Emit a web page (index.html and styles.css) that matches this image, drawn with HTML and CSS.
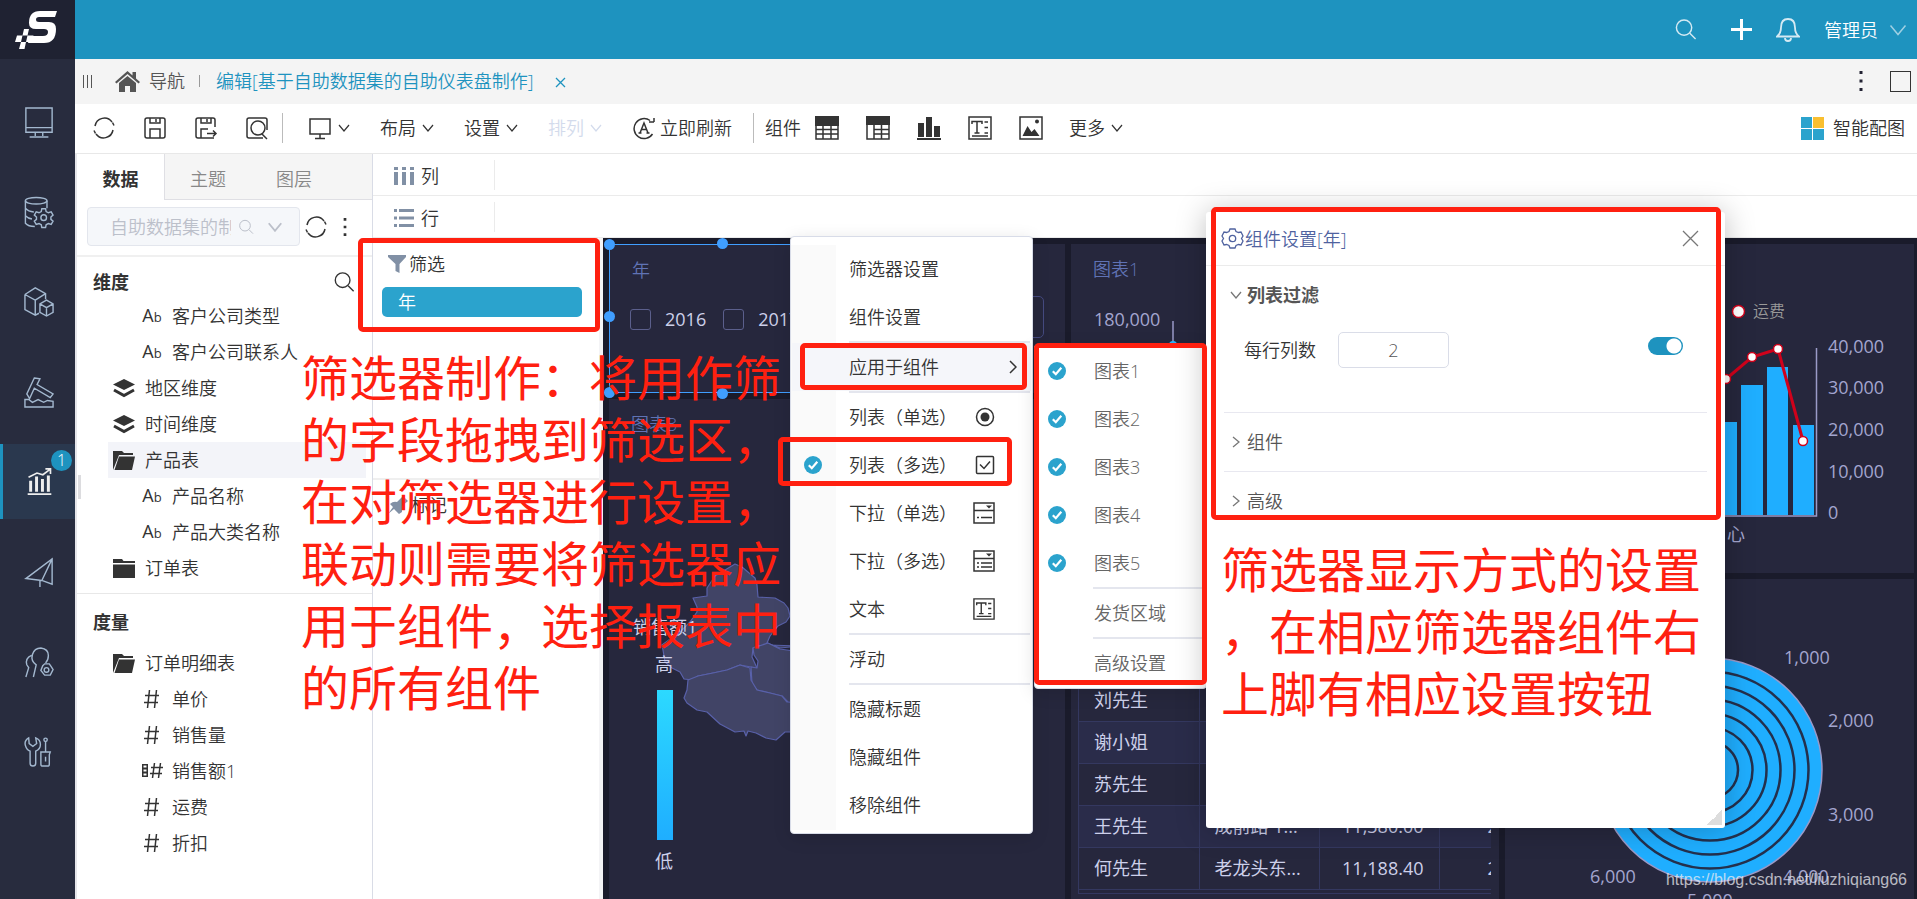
FILE: index.html
```html
<!DOCTYPE html>
<html lang="zh-CN">
<head>
<meta charset="utf-8">
<title>自助仪表盘制作</title>
<link rel="stylesheet" href="styles.css">
</head>
<body>
<svg class="sprite" aria-hidden="true">
  <symbol id="i-chev" viewBox="0 0 12 8"><path d="M1 1l5 6 5-6"/></symbol>
  <symbol id="i-refresh" viewBox="0 0 24 24"><path d="M3 10a9.500 9.500 0 0 1 17-4M21 14a9.500 9.500 0 0 1-17 4M2 14.500l1.500 3M22 9.500l-1.500-3"/></symbol>
  <symbol id="i-search" viewBox="0 0 24 24"><circle cx="10.500" cy="10" r="8"/><path d="M16.500 16l6 6"/></symbol>
  <symbol id="i-save" viewBox="0 0 24 24"><rect x="2" y="2" width="20" height="20" rx="2"/><path d="M7 2v5h10V2M13 3v3M7 22v-9h10v9"/></symbol>
  <symbol id="i-saveas" viewBox="0 0 24 24"><path d="M21 11V4a2 2 0 0 0-2-2H4a2 2 0 0 0-2 2v16a2 2 0 0 0 2 2h16M7 2v5h10V2M13 3v3M7 22v-9h7M13 17.500h9M19 14.500l3 3-3 3"/></symbol>
  <symbol id="i-preview" viewBox="0 0 24 24"><path d="M6 2H4a2 2 0 0 0-2 2v16a2 2 0 0 0 2 2h14M6 2h14a2 2 0 0 1 2 2v10"/><circle cx="13" cy="12" r="7"/><path d="M17 18l5 5"/></symbol>
  <symbol id="i-monitor" viewBox="0 0 24 24"><path d="M2 3h20v15H2zM12 18v4M7 22.500h10"/></symbol>
  <symbol id="i-auto" viewBox="0 0 24 24"><path d="M18 4.500A10 10 0 1 0 20.500 18M17 6h5M22 6V2M8 17l4-10 4 10M9.500 13.500h5M6.500 17h3M14.500 17h3"/></symbol>
  <symbol id="i-table" viewBox="0 0 24 24"><path class="f" d="M0 0h24v10H0z"/><path d="M1 9v14h22V9M1 13.500h22M1 18h22M8 9v14M16 9v14"/></symbol>
  <symbol id="i-pivot" viewBox="0 0 24 24"><path class="f" d="M0 0h24v9H0z"/><path d="M1 9v14h22V9M8 9v14M8 13.500h15M8 18h15M15.500 9v14"/></symbol>
  <symbol id="i-bars" viewBox="0 0 24 24"><path class="f" d="M1 7h6v14H1zM9 1h6v20H9zM17 10h6v11h-6zM0 22h24v2H0z"/></symbol>
  <symbol id="i-text" viewBox="0 0 24 24"><path d="M1 1h22v22H1zM4 8V5.500h10V8M9 5.500V17M6.500 17h5M16.500 6H20M16.500 11.500H20M16.500 17H20M4 20h16"/></symbol>
  <symbol id="i-image" viewBox="0 0 24 24"><path d="M1 1h22v22H1z"/><path class="f" d="M3.500 20l5-10 4 6 3-3 5 7z"/><circle class="f" cx="18" cy="5.500" r="2"/></symbol>
  <symbol id="i-check" viewBox="0 0 18 18"><circle class="ok" cx="9" cy="9" r="9"/><path class="tick" d="M4.800 9.200l3 3 5.500-6.500"/></symbol>
  <symbol id="i-layers" viewBox="0 0 22 20"><path class="f" d="M11 1l11 5.500L11 12 0 6.500z"/><path class="w" d="M1 12l10 5.500L21 12"/></symbol>
  <symbol id="i-open" viewBox="0 0 22 20"><path class="f" d="M0 20V1h9l2 2h9v2H6zM6 6.500h16L19 20H1.500z"/></symbol>
  <symbol id="i-folder" viewBox="0 0 22 20"><path class="f" d="M0 1h9l1.500 2H22v2H0zM0 6.500h22V20H0z"/></symbol>
  <symbol id="i-hash" viewBox="0 0 16 20"><path d="M5.500 1L3.500 19M12.500 1l-2 18M1 6.500h14M0 13.500h14"/></symbol>
  <symbol id="i-dots" viewBox="0 0 4 20"><path class="f" d="M.500 0h3v3h-3zM.500 8.500h3v3h-3zM.500 17h3v3h-3z"/></symbol>
  <symbol id="i-drop1" viewBox="0 0 22 22"><path d="M1 1h20v20H1zM1 8.500h20M8 15.500h11M4 15.500h2"/><path class="f" d="M13 3.500h6l-3 3z"/></symbol>
  <symbol id="i-drop2" viewBox="0 0 22 22"><path d="M1 1h20v20H1zM1 8.500h20M8 13h11M4 13h2M8 17h11M4 17h2"/><path class="f" d="M13 3.500h6l-3 3z"/></symbol>
</svg>

<div class="app">
  <aside class="rail">
    <a class="logo" href="#" aria-label="首页">
      <svg width="44" height="40" viewBox="0 0 44 40"><path fill="#fff" d="M43 1L41 7H25q-3 0-3 2.500t3 2.500h10q7 0 7 7 0 14-12 14H14l2-7h13q5 0 5-4 0-3-4-3h-8q-7 0-7-6 0-12 11-12zM10 19h5l-1.500 6.500H8.500zM3 25.500h5.500L7 32H1zM13.500 25.500h6L18 32h-6zM7 32h5l-1.500 7H5z"/></svg>
    </a>
    <nav class="rail-nav">
      <button class="rail-item" aria-label="门户"><svg viewBox="0 0 32 32"><path d="M2 1h28v26H2zM2 22h28M12 27v4M20 27v4M6 32h20"/></svg></button>
      <button class="rail-item" aria-label="数据"><svg viewBox="0 0 32 32"><ellipse cx="13" cy="4" rx="11.500" ry="3.500"/><path d="M1.500 4v24q3 3.500 10 3.500M24.500 4v8M1.500 12q3 3.500 9 4M1.500 20q3 3 7 3.500"/><circle cx="21" cy="22" r="3"/><path d="M19 12.500h4l.600 3 2.400 1.300 3-1 2 3.500-2.300 2v2.500l2.300 2-2 3.500-3-1-2.400 1.300-.600 3h-4l-.600-3-2.400-1.300-3 1-2-3.500 2.300-2v-2.500l-2.300-2 2-3.500 3 1 2.400-1.300z"/></svg></button>
      <button class="rail-item" aria-label="数据集"><svg viewBox="0 0 32 32"><path d="M1 8l11-7 11 6v6M1 8v16l11 6 4-2M1 8l11 6v16M12 14l11-7M17 18l7-4 7 4v9l-7 4-7-4zM17 18l7 4 7-4M24 22v9"/></svg></button>
      <button class="rail-item" aria-label="加工"><svg viewBox="0 0 32 32"><path d="M11 1l6 1-3 6 17 10-3 4-17-10-5 11-3-5zM1 24v8h30v-6l-6-1-4 2-6-3-6 3-4-3z"/></svg></button>
      <button class="rail-item active" aria-label="分析展现"><svg viewBox="0 0 32 32"><path d="M2 31h28M3 11l10-5 7 2 8-6M23 1h6v6"/><path d="M5.500 15v13M12.500 10v18M19.500 13v15M26.500 9v19" stroke-width="3.500"/></svg><span class="badge">1</span></button>
      <button class="rail-item" aria-label="发布"><svg viewBox="0 0 32 32"><path d="M30 2v27l-11-4-17-2zM30 2L19 25M17 24v8"/></svg></button>
      <button class="rail-item" aria-label="用户"><svg viewBox="0 0 32 32"><path d="M10 32l3-13Q7 15 9 8q2-7 9-7 8 1 8 8 0 5-3 8M8 9q-7 3-5 10l2 3-3 10"/><path d="M20 20l2-2h5l2 3 2 3-3 6h-6l-4-5z"/><circle cx="24" cy="24.500" r="2.500"/></svg></button>
      <button class="rail-item" aria-label="系统"><svg viewBox="0 0 32 32"><path d="M5 1Q0 4 1.500 9t5 6V28q0 3 3 3t3-3V15q5-2 5-7t-5-7l1 6-4 3-4-3z"/><circle cx="23" cy="3" r="1.800"/><path d="M23 5v11M18 16h10l-1 3v10q0 2-2 2h-5q-2 0-2-2V19zM23 21v5"/></svg></button>
    </nav>
  </aside>

  <div class="main">
    <header class="topbar">
      <button aria-label="搜索"><svg class="ln" width="23" height="23"><use href="#i-search"/></svg></button>
      <button aria-label="新建"><svg width="21" height="21" viewBox="0 0 21 21"><path d="M10.500 0v21M0 10.500h21" stroke="#fff" stroke-width="3"/></svg></button>
      <button aria-label="消息"><svg class="ln" width="24" height="24" viewBox="0 0 24 24"><path d="M1 18.500q4-3 4-9Q5 1 12 1t7 8.500q0 6 4 9zM9 20q0 3 3 3t3-3" stroke-width="1.800"/></svg></button>
      <button class="user">管理员<svg class="ln" width="20" height="12"><use href="#i-chev"/></svg></button>
    </header>

    <nav class="crumbs">
      <svg width="11" height="13" viewBox="0 0 11 13"><path d="M1.500 0v13M5.500 0v13M9.500 0v13" stroke="#555"/></svg>
      <a class="home" href="#"><svg width="25" height="21" viewBox="0 0 25 21"><path fill="#555" d="M12.500 0L0 11l1.500 1.500L12.500 3l11 9.500L25 11l-4-3.500V1h-3.500v3.500zM4 12v9h6v-6h5v6h6v-9l-8.500-7z"/></svg>导航</a>
      <i class="vbar"></i>
      <a class="doc" href="#">编辑[基于自助数据集的自助仪表盘制作]</a>
      <button class="close-tab" aria-label="关闭"><svg width="11" height="11" viewBox="0 0 11 11"><path d="M1 1l9 9M10 1l-9 9" stroke="#1e93bf" stroke-width="1.300"/></svg></button>
      <button class="more" aria-label="更多操作"><svg width="4" height="22"><use href="#i-dots"/></svg></button>
      <button class="max" aria-label="最大化"></button>
    </nav>

    <div class="toolbar">
      <button class="tool" aria-label="刷新"><svg width="24" height="24"><use href="#i-refresh"/></svg></button>
      <button class="tool" aria-label="保存"><svg width="24" height="24"><use href="#i-save"/></svg></button>
      <button class="tool" aria-label="另存为"><svg width="24" height="24"><use href="#i-saveas"/></svg></button>
      <button class="tool" aria-label="预览"><svg width="24" height="24"><use href="#i-preview"/></svg></button>
      <i class="sep"></i>
      <div class="drops">
        <button aria-label="设备"><svg width="24" height="24"><use href="#i-monitor"/></svg><svg class="cv" width="12" height="8"><use href="#i-chev"/></svg></button>
        <button>布局<svg class="cv" width="12" height="8"><use href="#i-chev"/></svg></button>
        <button>设置<svg class="cv" width="12" height="8"><use href="#i-chev"/></svg></button>
        <button class="off">排列<svg class="cv" width="12" height="8"><use href="#i-chev"/></svg></button>
        <button class="auto"><svg width="24" height="24"><use href="#i-auto"/></svg>立即刷新</button>
      </div>
      <i class="sep"></i>
      <span class="lbl">组件</span>
      <button class="tool" aria-label="表格"><svg width="24" height="24"><use href="#i-table"/></svg></button>
      <button class="tool" aria-label="交叉表"><svg width="24" height="24"><use href="#i-pivot"/></svg></button>
      <button class="tool" aria-label="图表"><svg width="24" height="24"><use href="#i-bars"/></svg></button>
      <button class="tool" aria-label="文本"><svg width="24" height="24"><use href="#i-text"/></svg></button>
      <button class="tool" aria-label="图片"><svg width="24" height="24"><use href="#i-image"/></svg></button>
      <div class="drops last"><button>更多<svg class="cv" width="12" height="8"><use href="#i-chev"/></svg></button></div>
      <button class="smart"><svg width="23" height="23" viewBox="0 0 23 23"><path fill="#2ba3cd" d="M0 0h11v11H0zM0 12h11v11H0zM12 12h11v11H12z"/><path fill="#f9bf30" d="M12 0h11v11H12z"/></svg>智能配图</button>
    </div>

    <div class="work">
      <section class="data">
        <div class="tabs"><button class="on">数据</button><button>主题</button><button>图层</button></div>
        <div class="picker">
          <div class="combo">
            <select aria-label="数据集"><option>自助数据集的制作</option></select>
            <div class="combo-icons"><svg width="16" height="16"><use href="#i-search"/></svg><svg width="16" height="10"><use href="#i-chev"/></svg></div>
          </div>
          <button class="reload" aria-label="刷新"><svg class="dk" width="24" height="24"><use href="#i-refresh"/></svg></button>
          <button aria-label="更多"><svg class="dk" width="4" height="18"><use href="#i-dots"/></svg></button>
        </div>
        <div class="group">
          <h2>维度<button aria-label="搜索字段"><svg class="dk" width="22" height="22"><use href="#i-search"/></svg></button></h2>
          <ul class="tree">
            <li class="leaf"><span class="ab">A<small>b</small></span>客户公司类型</li>
            <li class="leaf"><span class="ab">A<small>b</small></span>客户公司联系人</li>
            <li><svg class="dk" width="22" height="20"><use href="#i-layers"/></svg>地区维度</li>
            <li><svg class="dk" width="22" height="20"><use href="#i-layers"/></svg>时间维度</li>
            <li class="sel"><svg class="dk" width="22" height="20"><use href="#i-open"/></svg>产品表</li>
            <li class="leaf"><span class="ab">A<small>b</small></span>产品名称</li>
            <li class="leaf"><span class="ab">A<small>b</small></span>产品大类名称</li>
            <li><svg class="dk" width="22" height="20"><use href="#i-folder"/></svg>订单表</li>
          </ul>
        </div>
        <div class="group">
          <h2>度量</h2>
          <ul class="tree">
            <li><svg class="dk" width="22" height="20"><use href="#i-open"/></svg>订单明细表</li>
            <li class="leaf"><span class="ab"><svg class="dk" width="16" height="20"><use href="#i-hash"/></svg></span>单价</li>
            <li class="leaf"><span class="ab"><svg class="dk" width="16" height="20"><use href="#i-hash"/></svg></span>销售量</li>
            <li class="leaf"><span class="ab"><svg class="dk" width="21" height="18" viewBox="0 0 21 18"><path class="f" fill-rule="evenodd" d="M0 2h6v13H0zM1.500 3.500v2h3v-2zM1.500 7.500v2h3v-2zM1.500 11.500v2h3v-2z"/><path d="M12.500 1l-2 15M18.500 1l-2 15M9 5.500h12M8 11.500h12"/></svg></span>销售额1</li>
            <li class="leaf"><span class="ab"><svg class="dk" width="16" height="20"><use href="#i-hash"/></svg></span>运费</li>
            <li class="leaf"><span class="ab"><svg class="dk" width="16" height="20"><use href="#i-hash"/></svg></span>折扣</li>
          </ul>
        </div>
      </section>

      <section class="stage">
        <div class="shelf"><span><svg width="20" height="18" viewBox="0 0 20 18"><path fill="#8190a5" d="M0 0h4v3H0zM8 0h4v3H8zM16 0h4v3h-4zM0 5h4v13H0zM8 5h4v13H8zM16 5h4v13h-4z"/></svg>列</span></div>
        <div class="shelf"><span><svg width="20" height="18" viewBox="0 0 20 18"><path fill="#8190a5" d="M0 0h3v3H0zM0 7.500h3v3H0zM0 15h3v3H0zM5 0h15v3H5zM5 7.500h15v3H5zM5 15h15v3H5z"/></svg>行</span></div>
        <div class="lower">
          <div class="marks">
            <div class="filter">
              <div class="cap"><svg width="18" height="18" viewBox="0 0 18 18"><path fill="#8190a5" d="M0 0h18v2l-6.500 7v9l-4-2V9L0 2z"/></svg>筛选</div>
              <button class="pill">年</button>
            </div>
            <div class="mark"><svg width="20" height="18" viewBox="0 0 20 18"><path fill="#8190a5" d="M0 18l5-7-3-3q3-3 7-2l6-6 5 5-6 5v6l-3 2-5-5z"/></svg>标记</div>
          </div>
          <div class="canvas">
            <div class="col">
              <div class="row">
                <article class="card picked">
                  <h3>年</h3>
                  <div class="years"><label><input type="checkbox">2016</label><label><input type="checkbox">2017</label></div>
                  <i class="dot tl"></i><i class="dot tc"></i><i class="dot ml"></i><i class="dot bl"></i><i class="dot bc"></i>
                </article>
                <article class="card plain"><input class="ghost" type="text" aria-label="筛选值"></article>
              </div>
              <article class="card grow map">
                <h3>图表3</h3>
                <svg class="geo" width="456" height="500" viewBox="609 399 456 500">
                  <g fill="#414466" stroke="#5961aa" stroke-width="1.200" stroke-linejoin="round">
                    <path d="M800 646L768 645 757 646 753 648 752 657 757 668 751 667 740 665 727 670 713 673 698 676 693 680 684 679 680 672 672 668 665 662 663 650 662 645 680 632 690 622 697 612 697 607 693 598 707 596 707 588 715 576 735 564 742 567 755 578 757 585 758 597 775 598 784 603 788 608 790 616 786 622 778 626 770 636 767 643 780 648z"/>
                    <path d="M753 648L768 643 780 649 800 652V704L788 702 782 696 770 693 757 690 752 684 751 667 757 668 758 661 754 655z"/>
                    <path d="M688 680L698 676 713 673 727 670 740 665 750 668 751 680 757 690 770 693 782 696 787 702 800 703V732L785 732 776 740 766 738 756 733 748 731 746 736 744 731 735 732 720 724 707 712 697 710 687 703 684 698 687 690z"/>
                  </g>
                  <defs><linearGradient id="heat" x2="0" y2="1"><stop stop-color="#2cd9ff"/><stop offset="1" stop-color="#1faeff"/></linearGradient></defs>
                  <path fill="url(#heat)" d="M657 690h16v150h-16z"/>
                  <g class="lt"><text x="633" y="634">销售额1</text><text x="655" y="671">高</text><text x="655" y="868">低</text></g>
                </svg>
              </article>
            </div>
            <div class="col c2">
              <article class="card up">
                <h3>图表1</h3>
                <svg class="geo" width="428" height="329" viewBox="1071 244 428 329"><text class="ax" x="1094" y="326">180,000</text><path d="M1173 321v22" stroke="#9a9ac8" stroke-width="1.500"/><circle cx="1173" cy="345" r="4" fill="#2cb6ff"/></svg>
              </article>
              <article class="card grow tbl">
                <div class="clip"><table>
                  <tr><td>刘先生</td><td></td><td></td><td></td></tr>
                  <tr><td>谢小姐</td><td></td><td></td><td></td></tr>
                  <tr><td>苏先生</td><td></td><td></td><td></td></tr>
                  <tr><td>王先生</td><td>成前路 1...</td><td>11,380.00</td><td>2</td></tr>
                  <tr><td>何先生</td><td>老龙头东...</td><td>11,188.40</td><td>2</td></tr>
                </table></div>
              </article>
            </div>
            <div class="col c3">
              <article class="card up">
                <svg class="geo" width="409" height="329" viewBox="1505 244 409 329">
                  <path fill="#1faeff" d="M1715 422h22v93h-22zM1741 385h22v130h-22zM1767 367h21v148h-21zM1793 425h21v90h-21z"/>
                  <path fill="none" stroke="#9a9ac8" stroke-width="1.500" d="M1816.500 348v168H1700"/>
                  <path fill="none" stroke="#d0021b" stroke-width="3" d="M1726 379l26-22 26-8 25 92"/>
                  <g fill="#fff" stroke="#d0021b" stroke-width="1.500"><circle cx="1726" cy="379" r="4.500"/><circle cx="1752" cy="357" r="4.500"/><circle cx="1778" cy="349" r="4.500"/><circle cx="1803" cy="441" r="4.500"/><circle cx="1738.500" cy="311.500" r="6"/></g>
                  <text class="lg" x="1753" y="317">运费</text>
                  <g class="ax"><text x="1828" y="353">40,000</text><text x="1828" y="394">30,000</text><text x="1828" y="436">20,000</text><text x="1828" y="478">10,000</text><text x="1828" y="519">0</text><text x="1727" y="541">心</text></g>
                </svg>
              </article>
              <article class="card grow">
                <svg class="geo" width="409" height="320" viewBox="1505 579 409 320">
                  <circle cx="1710" cy="770" r="112" fill="#1faeff" stroke="#9a9ac8" stroke-width="1.500"/>
                  <g fill="none" stroke="#24304d" stroke-width="2.500"><circle cx="1710" cy="770" r="98.500"/><circle cx="1710" cy="770" r="84.500"/><circle cx="1710" cy="770" r="70.500"/><circle cx="1710" cy="770" r="56.500"/><circle cx="1710" cy="770" r="42.500"/><circle cx="1710" cy="770" r="28"/></g>
                  <g class="ax"><text x="1784" y="664">1,000</text><text x="1828" y="727">2,000</text><text x="1828" y="821">3,000</text><text x="1783" y="883">4,000</text><text x="1687" y="907">5,000</text><text x="1590" y="883">6,000</text></g>
                </svg>
              </article>
            </div>
          </div>
        </div>
      </section>
    </div>
  </div>
</div>

<i class="grip"></i>

<div class="menu">
  <button>筛选器设置</button>
  <button>组件设置</button>
  <hr>
  <button class="hover">应用于组件<svg class="arrow" width="8" height="14" viewBox="0 0 8 14"><path d="M1 1l6 6-6 6"/></svg></button>
  <hr>
  <button>列表（单选）<svg width="20" height="20" viewBox="0 0 20 20"><circle cx="10" cy="10" r="8.500"/><circle class="f" cx="10" cy="10" r="4.500"/></svg></button>
  <button>列表（多选）<svg class="chk" width="18" height="18"><use href="#i-check"/></svg><svg width="20" height="20" viewBox="0 0 20 20"><rect x="1.500" y="1.500" width="17" height="17" rx="1"/><path d="M5 9.500l4 4 6-7"/></svg></button>
  <button>下拉（单选）<svg width="22" height="22"><use href="#i-drop1"/></svg></button>
  <button>下拉（多选）<svg width="22" height="22"><use href="#i-drop2"/></svg></button>
  <button>文本<svg width="22" height="22"><use href="#i-text"/></svg></button>
  <hr>
  <button>浮动</button>
  <hr>
  <button>隐藏标题</button>
  <button>隐藏组件</button>
  <button>移除组件</button>
</div>

<div class="menu sub">
  <button><svg class="chk" width="18" height="18"><use href="#i-check"/></svg>图表1</button>
  <button><svg class="chk" width="18" height="18"><use href="#i-check"/></svg>图表2</button>
  <button><svg class="chk" width="18" height="18"><use href="#i-check"/></svg>图表3</button>
  <button><svg class="chk" width="18" height="18"><use href="#i-check"/></svg>图表4</button>
  <button><svg class="chk" width="18" height="18"><use href="#i-check"/></svg>图表5</button>
  <hr>
  <button>发货区域</button>
  <hr>
  <button>高级设置</button>
</div>

<div class="dialog" role="dialog" aria-label="组件设置">
  <div class="dlg-head">
    <svg class="gear" width="21" height="21" viewBox="0 0 21 21"><path d="M8 1h5l1 2.500 2.500 1L19 4l2 4-1.500 2.500L21 13l-2 4-2.500-.500-2.500 1-1 2.500H8l-1-2.500-2.500-1L2 17l-2-4 1.500-2.500L0 8l2-4 2.500.500 2.500-1z"/><circle cx="10.500" cy="10.500" r="3.200"/></svg>
    <span>组件设置[年]</span>
    <button aria-label="关闭"><svg width="17" height="17" viewBox="0 0 17 17"><path d="M1 1l15 15M16 1L1 16"/></svg></button>
  </div>
  <div class="dlg-body">
    <div class="fold open">
      <h4><svg width="12" height="8"><use href="#i-chev"/></svg>列表过滤</h4>
      <div class="field">
        <label for="cols">每行列数</label><input id="cols" type="text" value="2">
        <input class="switch" type="checkbox" role="switch" aria-label="启用每行列数" checked>
      </div>
    </div>
    <button class="fold"><svg width="8" height="12" viewBox="0 0 8 12"><path d="M1 1l6 5-6 5"/></svg>组件</button>
    <button class="fold"><svg width="8" height="12" viewBox="0 0 8 12"><path d="M1 1l6 5-6 5"/></svg>高级</button>
  </div>
</div>

<div class="box b1"></div><div class="box b2"></div><div class="box b3"></div><div class="box b4"></div><div class="box b5"></div>
<p class="note n1">筛选器制作：将用作筛<br>的字段拖拽到筛选区，<br>在对筛选器进行设置，<br>联动则需要将筛选器应<br>用于组件，选择报表中<br>的所有组件</p>
<p class="note n2">筛选器显示方式的设置<br>，在相应筛选器组件右<br>上脚有相应设置按钮</p>
<div class="mark-url">https://blog.csdn.net/liuzhiqiang66</div>
</body>
</html>
```
FILE: styles.css
```css
* { box-sizing: border-box; }
body {
  margin: 0; height: 100vh; overflow: hidden; position: relative;
  font: 350 18px/24px "Open Sans", "Noto Sans CJK SC", sans-serif; color: #333; background: #fff;
}
button { border: 0; background: none; padding: 0; margin: 0; font: inherit; color: inherit; display: inline-flex; align-items: center; cursor: pointer; }
a { color: inherit; text-decoration: none; }
h2, h3, h4, ul, p { margin: 0; padding: 0; }
ul { list-style: none; }
svg { fill: none; flex: none; display: block; }
.sprite { position: absolute; width: 0; height: 0; }
.f { fill: currentColor; stroke: none; }
.w { stroke-width: 3; }
.ok { fill: #2ba3cd; stroke: none; }
.tick { stroke: #fff; stroke-width: 2.2; }
.dk { stroke: #333; stroke-width: 1.5; color: #333; }

.app { display: flex; height: 100vh; }
.rail { width: 75px; flex: none; background: #282c3e; }
.logo { height: 59px; background: #1f2232; display: flex; align-items: center; justify-content: center; padding-right: 4px; }
.rail-nav { display: flex; flex-direction: column; gap: 15px; padding-top: 25px; }
.rail-item { position: relative; height: 75px; width: 75px; justify-content: center; padding-left: 3px; }
.rail-item svg { width: 30px; height: 30px; stroke: #a3b8cf; stroke-width: 1.5; overflow: visible; }
.rail-item.active { background: #2a384e; border-left: 3px solid #1e93bf; padding-left: 0; }
.rail-item.active svg { width: 27px; height: 29px; stroke: #eee; stroke-width: 2; }
.badge { position: absolute; top: 6px; right: 3px; width: 21px; height: 21px; border-radius: 50%; background: #1e93bf; color: #fff; font-size: 16px; line-height: 21px; text-align: center; }

.main { flex: 1; min-width: 0; display: flex; flex-direction: column; }
.topbar { height: 59px; flex: none; background: #1e93bf; color: #fff; display: flex; align-items: center; justify-content: flex-end; gap: 24px; padding-right: 9px; }
.topbar .ln { stroke: #d5eaf3; stroke-width: 1.5; }
.topbar button:first-child { margin-right: 10px; }
.user { gap: 10px; }
.user .ln { stroke-width: 1; opacity: .7; }
.crumbs { height: 45px; flex: none; background: #f4f4f4; display: flex; align-items: center; padding: 0 6px 1px 7px; color: #555; }
.home { display: flex; align-items: center; gap: 9px; margin-left: 22px; }
.vbar { width: 1px; height: 12px; background: #999; margin: 0 16px 0 14px; }
.doc { color: #1e93bf; }
.close-tab { margin-left: 22px; padding-top: 2px; }
.more { margin-left: auto; color: #223; }
.max { width: 21px; height: 21px; border: 1px solid #333; margin-left: 27px; }
.toolbar { height: 50px; flex: none; display: flex; align-items: center; padding: 0 12px 1px 3px; border-bottom: 1px solid #e8e8e8; }
.toolbar svg { stroke: currentColor; stroke-width: 1.5; }
.toolbar .cv { stroke-width: 1.2; }
.tool { width: 51px; justify-content: center; }
.sep { width: 1px; height: 30px; background: #bbb; }
.drops { display: flex; gap: 30px; padding: 0 21px 0 25px; }
.drops button { gap: 6px; }
.drops .auto { gap: 4px; }
.drops .off { color: #d3dbec; }
.drops.last { padding-left: 13px; }
.lbl { margin-left: 11px; }
.smart { margin-left: auto; gap: 9px; }
.toolbar .smart svg { stroke: none; }

.work { flex: 1; display: flex; min-height: 0; }
.data { width: 298px; flex: none; border-left: 2px solid #e6e6ea; border-right: 1px solid #d9dce6; }
.tabs { display: flex; height: 46px; background: #f5f5f5; box-shadow: inset 0 -1px #dfdfe4; color: #888; }
.tabs button { width: 86px; justify-content: center; padding-top: 3px; }
.tabs .on { width: 88px; background: #fff; color: #333; font-weight: 700; border-right: 1px solid #dfdfe4; }
.picker { height: 57px; display: flex; align-items: center; padding: 0 25px 2px 10px; border-bottom: 2px solid #f0f0f0; justify-content: space-between; }
.combo { width: 213px; height: 39px; position: relative; }
.combo select { appearance: none; width: 100%; height: 100%; border: 1px solid #e3e6ed; border-radius: 4px; background: #f5f7fa; font: inherit; color: #bcc0ca; padding: 0 68px 0 22px; opacity: 1; }
.combo-icons { position: absolute; right: 17px; top: 12px; display: flex; align-items: center; gap: 13px; stroke: #bcc0ca; stroke-width: 1.5; pointer-events: none; }
.reload { margin-right: 12px; }
.group { padding-bottom: 7px; border-bottom: 1px solid #e8e8e8; }
.group:last-child { border: 0; }
.group h2 { display: flex; justify-content: space-between; align-items: center; height: 41px; padding: 9px 17px 0 16px; font-size: 18px; font-weight: 700; }
.group + .group h2 { height: 49px; padding-top: 7px; }
.group + .group .tree { padding-top: 2px; }
.tree li { height: 36px; display: flex; align-items: center; gap: 10px; margin: 0 6px 0 31px; padding-left: 5px; white-space: nowrap; }
.tree .leaf { padding-left: 31px; gap: 7px; }
.tree .sel { background: #f3f4f9; }
.ab { width: 26px; display: flex; align-items: baseline; justify-content: center; font-size: 18px; font-weight: 400; }
.ab small { font-size: 13px; }

.stage { flex: 1; min-width: 0; display: flex; flex-direction: column; }
.shelf { height: 42px; flex: none; border-bottom: 1px solid #ebebeb; padding: 6px 0; }
.shelf span { display: flex; align-items: center; gap: 7px; width: 122px; height: 30px; padding: 2px 0 0 21px; border-right: 1px solid #ebebeb; }
.lower { flex: 1; display: flex; min-height: 0; }
.marks { width: 230px; flex: none; border-right: 4px solid #f4f4f6; }
.filter { height: 242px; padding: 14px 17px 0 9px; border-bottom: 2px solid #efefef; }
.cap { display: flex; align-items: center; gap: 3px; padding-left: 6px; }
.pill { width: 100%; height: 30px; margin-top: 11px; padding-left: 16px; border-radius: 5px; background: #2ba3cd; color: #fff; }
.mark { display: flex; align-items: center; gap: 3px; padding: 13px 15px; }

.canvas { flex: 1; min-width: 0; display: flex; gap: 6px; padding: 6px 3px 0 6px; background: #1a1b2b; color: #cdd0ea; font-weight: 400; overflow: hidden; }
.col { flex: 456 1 0; min-width: 0; display: flex; flex-direction: column; gap: 6px; }
.c2 { flex-grow: 428; }
.c3 { flex-grow: 409; }
.row { display: flex; height: 149px; }
.card { background: #26273d; position: relative; overflow: hidden; min-height: 0; }
.card h3 { position: absolute; left: 22px; top: 13px; font-size: 18px; font-weight: 350; color: #6073b5; }
.grow { flex: 1; }
.up { height: 329px; flex: none; }
.picked { width: 228px; overflow: visible; border: solid #409eff; border-width: 1px 0 1px 1px; }
.plain { flex: 1; padding: 52px 21px 0 0; }
.ghost { width: 100%; height: 42px; border: 1px solid #454a80; border-radius: 5px; background: none; }
.years { display: flex; gap: 17px; padding: 62px 0 0 20px; }
.years label { display: flex; align-items: center; gap: 14px; }
.years input { appearance: none; width: 21px; height: 21px; margin: 0; border: 1px solid #5b5f8c; border-radius: 3px; }
.dot { position: absolute; width: 11px; height: 11px; border-radius: 50%; background: #409eff; }
.tl { left: -6px; top: -6px; } .tc { left: 107px; top: -7px; } .ml { left: -6px; top: 66px; }
.bl { left: -6px; bottom: -6px; } .bc { left: 107px; bottom: -7px; }
.geo { display: block; }
.lt { fill: #cdd0ea; }
.ax { fill: #a3a5cf; }
.lg { fill: #999; font-size: 16px; font-weight: 350; }
.tbl { padding: 100px 8px 0 7px; }
.clip { overflow: hidden; border: solid #343860; border-width: 0 0 1px 1px; padding-bottom: 3px; }
table { border-collapse: collapse; table-layout: fixed; width: 480px; }
td { width: 120px; height: 42px; padding: 0 15px; border-right: 1px solid #343860; border-bottom: 1px solid #343860; white-space: nowrap; }
td:nth-child(n+3) { text-align: right; }
td:last-child { text-align: left; padding-left: 48px; }
tr:nth-child(even) { background: #2a2c4a; }

.grip { position: absolute; left: 78px; top: 475px; width: 3px; height: 24px; background: #dcdcdf; }
.menu { position: absolute; left: 790px; top: 236px; width: 243px; padding: 8px 1px 4px; border: 1px solid #d8dce8; border-radius: 4px; background: #fff linear-gradient(#fafafa, #fafafa) 0 8px / 45px 585px no-repeat; box-shadow: 0 4px 18px rgba(0,0,0,.12); }
.menu button { display: flex; position: relative; width: 100%; height: 48px; padding: 0 36px 0 57px; justify-content: space-between; }
.menu svg { stroke: #333; stroke-width: 1.5; }
.menu .arrow { margin-right: -22px; }
.menu .chk { position: absolute; left: 12px; top: 15px; stroke: none; }
.menu hr { border: 0; height: 2px; margin: 0 1px 0 57px; background: #e4e6ee; }
.menu .hover { background: #f5f6fa; }
.menu.sub { left: 1034px; top: 344px; width: 173px; padding-top: 2px; padding-bottom: 1px; color: #666; background: #fff; }
.menu.sub button { padding-left: 58px; }

.dialog { position: absolute; left: 1206px; top: 212px; width: 519px; height: 616px; background: #fff; border-radius: 3px; box-shadow: 0 0 30px rgba(0,0,0,.25); }
.dialog::after { content: ""; position: absolute; right: 3px; bottom: 3px; width: 15px; height: 15px; background: linear-gradient(135deg, transparent 50%, #ddd 50%); }
.dialog svg { stroke: #777; stroke-width: 1.3; }
.dlg-head { display: flex; align-items: center; gap: 2px; height: 54px; padding: 0 26px 0 16px; border-bottom: 1px solid #ebebeb; color: #4f629f; }
.dlg-head .gear { stroke: #4f629f; overflow: visible; }
.dlg-head button { margin-left: auto; }
.dlg-body { padding: 0 18px; color: #555; }
.fold { display: flex; align-items: center; gap: 7px; width: 100%; height: 59px; padding: 0 0 1px 8px; border-bottom: 1px solid #e8e8f0; }
.fold:last-child { border: 0; }
.fold.open { display: block; height: 147px; padding: 17px 0 0 6px; }
.fold h4 { display: flex; align-items: center; gap: 5px; font-size: 18px; font-weight: 700; }
.field { display: flex; align-items: center; margin-top: 25px; padding: 0 24px 0 14px; color: #333; }
.field input[type=text] { width: 111px; height: 36px; margin-left: 22px; border: 1px solid #dadde8; border-radius: 5px; font: inherit; color: #555; text-align: center; }
.switch { appearance: none; width: 35px; height: 18px; margin: -8px 0 0 auto; border-radius: 9px; background: radial-gradient(circle at 26px 9px, #fff 7px, #1e93bf 8px); }

.box { position: absolute; border: 5px solid #ff2010; border-radius: 5px; }
.b1 { left: 358px; top: 238px; width: 242px; height: 94px; }
.b2 { left: 800px; top: 343px; width: 227px; height: 47px; }
.b3 { left: 778px; top: 437px; width: 234px; height: 49px; }
.b4 { left: 1034px; top: 343px; width: 173px; height: 342px; }
.b5 { left: 1211px; top: 207px; width: 510px; height: 313px; }
.note { position: absolute; color: #ff2010; font-family: "Noto Sans CJK SC", sans-serif; font-size: 48px; font-weight: 400; line-height: 62px; white-space: nowrap; }
.n1 { left: 301px; top: 344px; }
.n2 { left: 1221px; top: 536px; }
.mark-url { position: absolute; right: 10px; bottom: 8px; font: 16px/22px "Liberation Sans", sans-serif; color: rgba(235,235,240,.75); }
```
